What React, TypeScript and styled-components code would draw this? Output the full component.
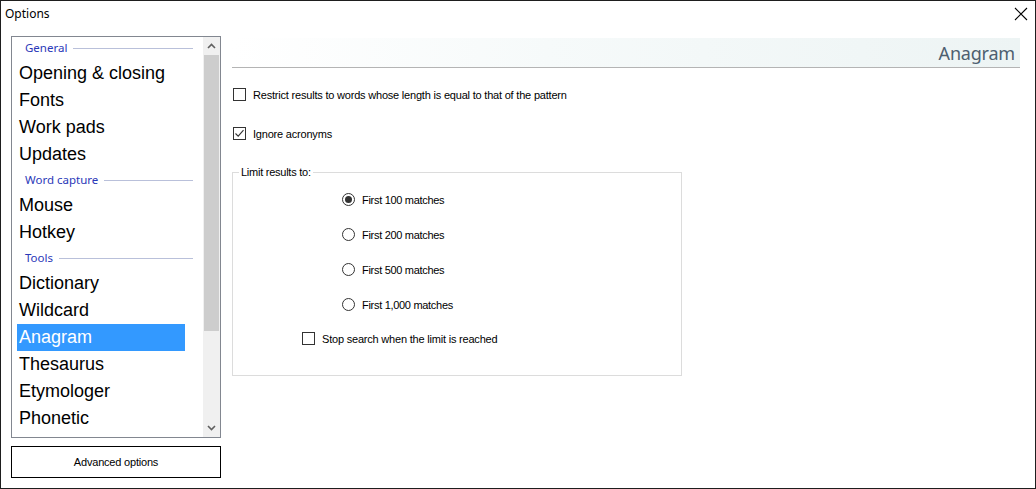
import React from "react";
import styled, { createGlobalStyle } from "styled-components";

const Global = createGlobalStyle`
  html, body { margin: 0; padding: 0; background: #ffffff; }
  * { box-sizing: border-box; }
`;

const Window = styled.div`
  width: 1036px;
  height: 489px;
  border: 1px solid #1e1e1e;
  background: #ffffff;
  display: flex;
  flex-direction: column;
  font-family: "Liberation Sans", Arial, sans-serif;
  color: #000;
`;

const TitleBar = styled.div`
  height: 26px;
  display: flex;
  align-items: center;
  justify-content: space-between;
  padding: 0 7px 1px 4px;
`;

const Title = styled.span`
  font-family: "Noto Sans", "Open Sans", sans-serif;
  font-size: 12px;
  color: #000;
`;

const Body = styled.div`
  flex: 1;
  display: flex;
  padding: 9px 15px 0 10px;
  gap: 11px;
`;

const LeftColumn = styled.div`
  width: 210px;
  display: flex;
  flex-direction: column;
  gap: 8px;
`;

const ListBox = styled.div`
  height: 402px;
  border: 1px solid #828790;
  display: flex;
  overflow: hidden;
`;

const ListArea = styled.div`
  flex: 1;
  display: flex;
  flex-direction: column;
  margin-top: -1px;
  overflow: hidden;
`;

const GroupHeader = styled.div`
  height: 24px;
  flex: none;
  display: flex;
  align-items: flex-start;
  padding: 0 10px 0 13px;
  gap: 6px;
  font-family: "Noto Sans", "Open Sans", sans-serif;
  font-size: 11.5px;
  line-height: 24px;
  color: #2a38b8;
  &::after {
    content: "";
    flex: 1;
    height: 1px;
    margin-top: 12px;
    background: #b9c0da;
  }
`;

const Item = styled.div<{ $selected?: boolean }>`
  height: 27px;
  flex: none;
  width: 168px;
  margin-left: 5px;
  padding-left: 2px;
  display: flex;
  align-items: center;
  font-family: "Liberation Sans", Arial, sans-serif;
  font-size: 18px;
  color: ${(p) => (p.$selected ? "#ffffff" : "#000000")};
  background: ${(p) => (p.$selected ? "#3399ff" : "transparent")};
`;

const ScrollBar = styled.div`
  width: 17px;
  background: #f0f0f0;
  display: flex;
  flex-direction: column;
`;

const ScrollArrow = styled.div`
  height: 18px;
  display: flex;
  align-items: center;
  justify-content: center;
`;

const ScrollThumb = styled.div`
  height: 276px;
  margin: 0 1px;
  background: #cdcdcd;
`;

const ScrollTrack = styled.div`
  flex: 1;
`;

const AdvancedButton = styled.button`
  height: 32px;
  border: 1px solid #000;
  background: #ffffff;
  font-family: "Liberation Sans", Arial, sans-serif;
  font-size: 11px;
  line-height: 14px;
  letter-spacing: -0.2px;
  color: #000;
  padding: 0 0 1px 0;
  display: flex;
  align-items: center;
  justify-content: center;
`;

const Main = styled.div`
  flex: 1;
  display: flex;
  flex-direction: column;
  padding-top: 2px;
`;

const PageHeader = styled.div`
  height: 30px;
  border-bottom: 1px solid #b4b4b4;
  background: linear-gradient(to right, #ffffff 0%, #f6fafa 40%, #edf4f4 100%);
  display: flex;
  align-items: center;
  justify-content: flex-end;
  padding: 1px 5px 0 0;
  font-family: "Noto Sans", "Open Sans", sans-serif;
  font-size: 18px;
  letter-spacing: -0.2px;
  color: #4d5f70;
`;

const CheckRow = styled.label<{ $top: number; $left?: number }>`
  display: flex;
  align-items: center;
  gap: 7px;
  height: 13px;
  margin-top: ${(p) => p.$top}px;
  margin-left: ${(p) => p.$left ?? 1}px;
  font-size: 11px;
  letter-spacing: -0.2px;
  color: #000;
`;

const Box = styled.span`
  width: 13px;
  height: 13px;
  flex: none;
  border: 1px solid #333333;
  background: #fff;
  display: flex;
  align-items: center;
  justify-content: center;
`;

const Group = styled.fieldset`
  width: 450px;
  height: 210px;
  margin: 26px 0 0 0;
  padding: 0;
  border: 1px solid #dcdcdc;
  display: flex;
  flex-direction: column;
`;

const Legend = styled.legend`
  margin-left: 6px;
  padding: 0 2px;
  font-size: 11px;
  letter-spacing: -0.25px;
  line-height: 13px;
`;

const RadioList = styled.div`
  display: flex;
  flex-direction: column;
  gap: 22px;
  margin: 14px 0 0 109px;
`;

const RadioRow = styled.label`
  display: flex;
  align-items: center;
  gap: 7px;
  height: 13px;
  font-size: 11px;
  letter-spacing: -0.3px;
`;

const Radio = styled.span<{ $on?: boolean }>`
  width: 13px;
  height: 13px;
  border-radius: 50%;
  border: 1px solid #333333;
  flex: none;
  display: flex;
  align-items: center;
  justify-content: center;
  &::after {
    content: "";
    width: 7px;
    height: 7px;
    border-radius: 50%;
    background: ${(p) => (p.$on ? "#333333" : "transparent")};
  }
`;

const Chevron = ({ down }: { down?: boolean }) => (
  <svg width="9" height="6" viewBox="0 0 9 6">
    <polyline
      points={down ? "1,1 4.5,4.5 8,1" : "1,5 4.5,1.5 8,5"}
      fill="none"
      stroke="#606060"
      strokeWidth="1.6"
    />
  </svg>
);

const CloseIcon = () => (
  <svg width="14" height="14" viewBox="0 0 14 14">
    <path d="M1 1 L13 13 M13 1 L1 13" stroke="#000" strokeWidth="1.1" />
  </svg>
);

const Check = () => (
  <svg width="11" height="11" viewBox="0 0 11 11">
    <polyline points="1.5,5.5 4.2,8.2 9.5,2.2" fill="none" stroke="#333" strokeWidth="1.1" />
  </svg>
);

type Entry = { kind: "h" | "i"; label: string };

const entries: Entry[] = [
  { kind: "h", label: "General" },
  { kind: "i", label: "Opening & closing" },
  { kind: "i", label: "Fonts" },
  { kind: "i", label: "Work pads" },
  { kind: "i", label: "Updates" },
  { kind: "h", label: "Word capture" },
  { kind: "i", label: "Mouse" },
  { kind: "i", label: "Hotkey" },
  { kind: "h", label: "Tools" },
  { kind: "i", label: "Dictionary" },
  { kind: "i", label: "Wildcard" },
  { kind: "i", label: "Anagram" },
  { kind: "i", label: "Thesaurus" },
  { kind: "i", label: "Etymologer" },
  { kind: "i", label: "Phonetic" },
];

const radios = ["First 100 matches", "First 200 matches", "First 500 matches", "First 1,000 matches"];

export default function App() {
  return (
    <>
      <Global />
      <Window>
        <TitleBar>
          <Title>Options</Title>
          <CloseIcon />
        </TitleBar>
        <Body>
          <LeftColumn>
            <ListBox>
              <ListArea>
                {entries.map((e) =>
                  e.kind === "h" ? (
                    <GroupHeader key={e.label}>{e.label}</GroupHeader>
                  ) : (
                    <Item key={e.label} $selected={e.label === "Anagram"}>
                      {e.label}
                    </Item>
                  )
                )}
              </ListArea>
              <ScrollBar>
                <ScrollArrow>
                  <Chevron />
                </ScrollArrow>
                <ScrollThumb />
                <ScrollTrack />
                <ScrollArrow>
                  <Chevron down />
                </ScrollArrow>
              </ScrollBar>
            </ListBox>
            <AdvancedButton>Advanced options</AdvancedButton>
          </LeftColumn>
          <Main>
            <PageHeader>Anagram</PageHeader>
            <CheckRow $top={20}>
              <Box />
              Restrict results to words whose length is equal to that of the pattern
            </CheckRow>
            <CheckRow $top={26}>
              <Box>
                <Check />
              </Box>
              Ignore acronyms
            </CheckRow>
            <Group>
              <Legend>Limit results to:</Legend>
              <RadioList>
                {radios.map((r, i) => (
                  <RadioRow key={r}>
                    <Radio $on={i === 0} />
                    {r}
                  </RadioRow>
                ))}
              </RadioList>
              <CheckRow $top={21} $left={69}>
                <Box />
                Stop search when the limit is reached
              </CheckRow>
            </Group>
          </Main>
        </Body>
      </Window>
    </>
  );
}
